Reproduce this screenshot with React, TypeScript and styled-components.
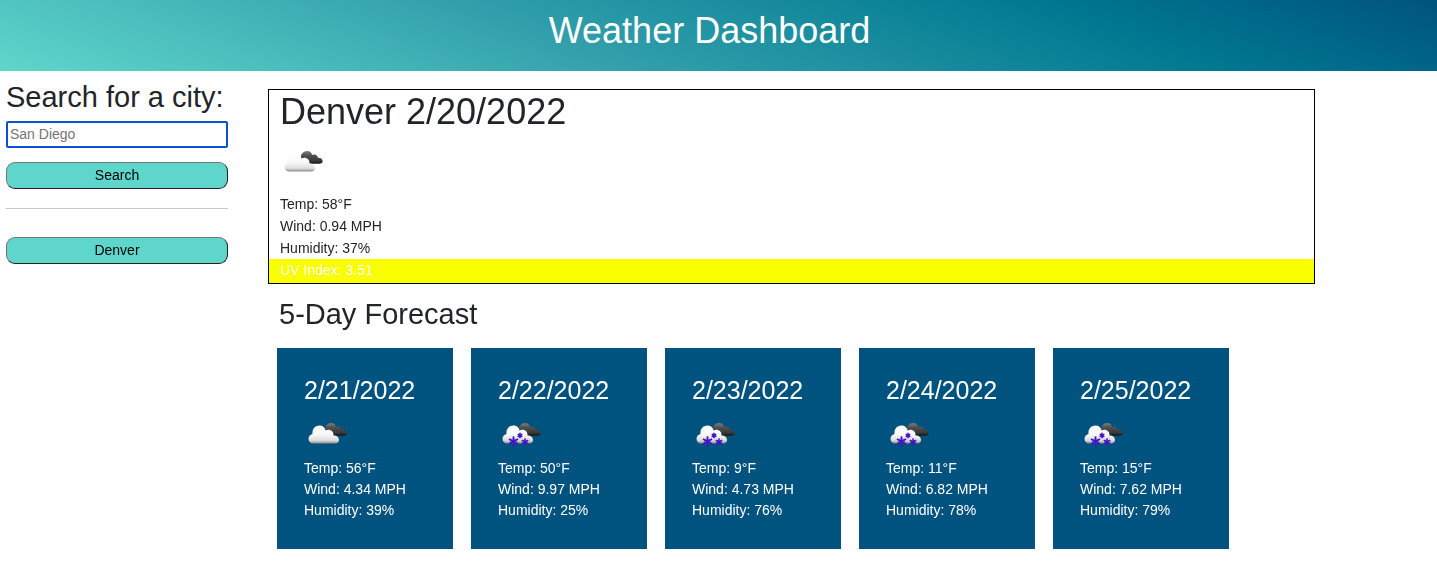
import React from "react";
import styled, { createGlobalStyle } from "styled-components";

const GlobalStyle = createGlobalStyle`
  *, *::before, *::after { box-sizing: border-box; }
  body {
    margin: 0;
    background: #fff;
    color: #212529;
    font: 400 14px/22px "Liberation Sans", Arial, sans-serif;
  }
  h1, h2, h3, p { margin: 0; font-weight: 400; }
`;

const Header = styled.header`
  padding: 9px 18px 18px 0;
  background: linear-gradient(20deg, #5fd6cb 0%, #319fab 40%, #007991 75%, #00537e 100%);
  color: #fff;
  text-align: center;
`;

const PageTitle = styled.h1`
  font-size: 36px;
  line-height: 44px;
`;

const Layout = styled.div`
  display: grid;
  grid-template-columns: 222px minmax(0, 1fr);
  column-gap: 40px;
  padding: 9px 122px 28px 6px;
`;

const Sidebar = styled.aside`
  display: flex;
  flex-direction: column;
`;

const SearchForm = styled.form`
  display: flex;
  flex-direction: column;
`;

const SearchLabel = styled.label`
  font-size: 29px;
  line-height: 34px;
  margin-bottom: 7px;
  white-space: nowrap;
`;

const SearchInput = styled.input`
  height: 27px;
  margin-bottom: 14px;
  padding: 0 2px 2px;
  border: 2px solid #0b50d0;
  border-radius: 2px;
  outline: none;
  background: #fff;
  color: #000;
  font: inherit;
  &::placeholder { color: #757575; opacity: 1; }
`;

const CityButton = styled.button`
  width: 100%;
  height: 27px;
  padding: 0 6px 2px;
  border: 1px solid;
  border-color: #767676 #212121 #212121 #767676;
  border-radius: 9px;
  background: #5fd6cb;
  color: #000;
  font: inherit;
  cursor: pointer;
`;

const Divider = styled.hr`
  width: 100%;
  height: 1px;
  margin: 19px 0 28px;
  border: 0;
  background: #c8c9ca;
`;

const Main = styled.main`
  padding-top: 9px;
`;

const Current = styled.section`
  border: 1px solid #000;
`;

const CurrentBody = styled.div`
  padding: 0 11px;
`;

const CurrentTitle = styled.h2`
  font-size: 36px;
  line-height: 43px;
  margin-bottom: 7px;
`;

const CurrentIcon = styled.div`
  height: 53px;
`;

const UvIndex = styled.p`
  height: 24px;
  padding: 0 11px;
  background: #faff00;
  color: #fff;
`;

const ForecastTitle = styled.h2`
  margin: 13px 0 17px;
  padding-left: 11px;
  font-size: 29px;
  line-height: 34px;
`;

const ForecastRow = styled.div`
  display: flex;
  flex-wrap: wrap;
  gap: 18px;
  padding-left: 9px;
`;

const DayCard = styled.article`
  width: 176px;
  padding: 27px 27px 28px;
  background: #00537e;
  color: #fff;
  line-height: 21px;
`;

const DayTitle = styled.h3`
  font-size: 25px;
  line-height: 30px;
  margin-bottom: 7px;
  white-space: nowrap;
`;

const DayIcon = styled.div`
  height: 46px;
`;

const Glyph = styled.svg`
  display: block;
  width: 45px;
  height: 45px;
`;

type Sky = "clouds" | "snow";

const flakes = [
  { x: 15.5, y: 29.5, r: 5.2, width: 1.7 },
  { x: 22, y: 23.5, r: 2.7, width: 1.5 },
  { x: 27, y: 30, r: 3.8, width: 1.4 },
];

function WeatherIcon({ sky, id }: { sky: Sky; id: string }) {
  return (
    <Glyph viewBox="0 0 45 45" role="img" aria-label={sky === "snow" ? "Snow" : "Broken clouds"}>
      <defs>
        <linearGradient id={id + "-front"} x1="0" y1="0" x2="0" y2="1">
          <stop offset="0" stopColor="#ffffff" />
          <stop offset="0.5" stopColor="#f8f8f8" />
          <stop offset="0.82" stopColor="#dedede" />
          <stop offset="1" stopColor="#8d8d8d" />
        </linearGradient>
        <linearGradient id={id + "-back"} x1="0" y1="0" x2="0" y2="1">
          <stop offset="0" stopColor="#808080" />
          <stop offset="0.35" stopColor="#505050" />
          <stop offset="0.75" stopColor="#3b3b3b" />
          <stop offset="1" stopColor="#151515" />
        </linearGradient>
      </defs>
      <path
        d="M20.500 19C20.500 14 23.500 11 27 11C30 11 31.500 12.500 32.200 15C35 13.700 37.500 15 38 17.800C41 17.800 42.700 19.500 42.700 21.200C42.700 22.700 41.500 23.700 39 23.700H27Z"
        fill={`url(#${id}-back)`}
      />
      <path
        d="M9.500 31.500C6.500 31.500 4.500 29.500 4.500 27C4.500 24.500 6 22.500 8.500 22C8 17 11 13.500 15.500 13.500C19 13.500 21 15.500 21.500 18.500C25.500 16.500 30 19 29.500 23.500C33 23.500 35 25.500 35 28C35 30 33.500 31.500 31 31.500Z"
        fill={`url(#${id}-front)`}
      />
      {sky === "snow" &&
        flakes.map((f) => (
          <g key={f.x} stroke="#3d14c4" strokeWidth={f.width} fill="none">
            {[0, 60, 120].map((angle) => (
              <path
                key={angle}
                d={`M${f.x} ${f.y - f.r}V${f.y + f.r}`}
                transform={`rotate(${angle} ${f.x} ${f.y})`}
              />
            ))}
            <circle cx={f.x} cy={f.y} r={f.r * 0.55} strokeWidth="1" strokeOpacity="0.6" />
          </g>
        ))}
    </Glyph>
  );
}

interface Day {
  date: string;
  sky: Sky;
  temp: string;
  wind: string;
  humidity: string;
}

const forecast: Day[] = [
  { date: "2/21/2022", sky: "clouds", temp: "56", wind: "4.34", humidity: "39" },
  { date: "2/22/2022", sky: "snow", temp: "50", wind: "9.97", humidity: "25" },
  { date: "2/23/2022", sky: "snow", temp: "9", wind: "4.73", humidity: "76" },
  { date: "2/24/2022", sky: "snow", temp: "11", wind: "6.82", humidity: "78" },
  { date: "2/25/2022", sky: "snow", temp: "15", wind: "7.62", humidity: "79" },
];

export default function App() {
  return (
    <>
      <GlobalStyle />
      <Header>
        <PageTitle>Weather Dashboard</PageTitle>
      </Header>
      <Layout>
        <Sidebar>
          <SearchForm onSubmit={(e) => e.preventDefault()}>
            <SearchLabel htmlFor="city">Search for a city:</SearchLabel>
            <SearchInput id="city" type="text" placeholder="San Diego" autoFocus />
            <CityButton type="submit">Search</CityButton>
          </SearchForm>
          <Divider />
          <CityButton type="button">Denver</CityButton>
        </Sidebar>
        <Main>
          <Current>
            <CurrentBody>
              <CurrentTitle>Denver 2/20/2022</CurrentTitle>
              <CurrentIcon>
                <WeatherIcon sky="clouds" id="today" />
              </CurrentIcon>
              <p>Temp: 58°F</p>
              <p>Wind: 0.94 MPH</p>
              <p>Humidity: 37%</p>
            </CurrentBody>
            <UvIndex>UV Index: 3.51</UvIndex>
          </Current>
          <ForecastTitle>5-Day Forecast</ForecastTitle>
          <ForecastRow>
            {forecast.map((day) => (
              <DayCard key={day.date}>
                <DayTitle>{day.date}</DayTitle>
                <DayIcon>
                  <WeatherIcon sky={day.sky} id={"day-" + day.date.replace(/\//g, "-")} />
                </DayIcon>
                <p>Temp: {day.temp}°F</p>
                <p>Wind: {day.wind} MPH</p>
                <p>Humidity: {day.humidity}%</p>
              </DayCard>
            ))}
          </ForecastRow>
        </Main>
      </Layout>
    </>
  );
}
